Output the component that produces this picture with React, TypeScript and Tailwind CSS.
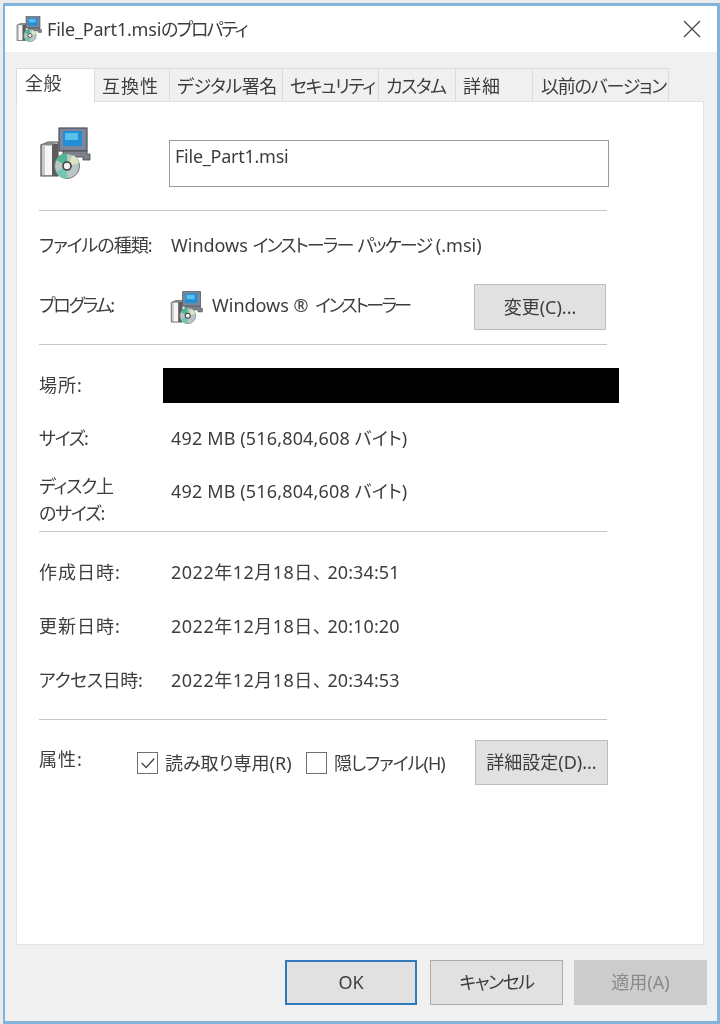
import React from "react";

function MsiIcon({ className }: { className: string }) {
  return (
    <svg viewBox="0 0 52 52" className={className}>
      <path d="M2 18 L9 15 L19 15 L19 49 L2 49 Z" fill="#c9c9c9" stroke="#4f4f4f" strokeWidth="1.2" />
      <rect x="6" y="19" width="7" height="29" fill="#f6f6f6" />
      <rect x="13" y="17" width="6" height="32" fill="#5c5c5c" />
      <path d="M2 18 L9 15 L19 15 L13 18 Z" fill="#8a8a8a" />
      <rect x="20" y="1" width="28" height="23" fill="#7f8698" stroke="#4a5163" strokeWidth="1.2" />
      <rect x="24" y="4" width="19" height="15" fill="#1f8fd8" />
      <rect x="26" y="6" width="13" height="7" fill="#5cc0ee" />
      <path d="M24 24 L48 24 L48 27 L51 27 L51 33 L44 33 L44 30 L24 30 Z" fill="#7c818c" stroke="#454545" strokeWidth="0.8" />
      <circle cx="28" cy="39" r="12.5" fill="#b9c6c4" stroke="#6d7a78" strokeWidth="1" />
      <path d="M28 39 L17 33 A12.5 12.5 0 0 1 28 26.5 Z" fill="#4fb596" />
      <path d="M28 39 L17 45 A12.5 12.5 0 0 0 28 51.5 Z" fill="#75c6b4" />
      <path d="M28 39 L40 36 A12.5 12.5 0 0 0 34 28 Z" fill="#e0e5c4" />
      <circle cx="28" cy="39" r="4" fill="#f2f2f2" stroke="#3f3f3f" strokeWidth="1.6" />
    </svg>
  );
}

function Divider() {
  return <div className="h-px w-[568px] bg-[#c6c6c6]" />;
}

function Row({
  label,
  labelClass = "",
  height,
  children,
}: {
  label: string;
  labelClass?: string;
  height: string;
  children: React.ReactNode;
}) {
  return (
    <div className={`flex items-center ${height}`}>
      <div className={`w-[132px] shrink-0 whitespace-nowrap ${labelClass}`}>{label}</div>
      <div className="whitespace-nowrap">{children}</div>
    </div>
  );
}

function DateValue({ date, time }: { date: string; time: string }) {
  return (
    <>
      <span className="mr-[5px] tracking-[0.5px]">{date}</span>
      <span className="tracking-[0.1px]">{time}</span>
    </>
  );
}

const tabs = [
  { label: "互換性", c: "w-[75px] pl-[7px] tracking-[1px]" },
  { label: "デジタル署名", c: "w-[113px] pl-[7px] tracking-[-0.5px]" },
  { label: "セキュリティ", c: "w-[96px] pl-[7px] tracking-[-1.4px]" },
  { label: "カスタム", c: "w-[77px] pl-[7px] tracking-[-1.5px]" },
  { label: "詳細", c: "w-[77px] pl-[7px] tracking-[1px]" },
  { label: "以前のバージョン", c: "w-[136px] pl-[8px] tracking-[-1.2px]" },
];

function Check({ checked }: { checked?: boolean }) {
  return (
    <div className="flex h-[22px] w-[21px] shrink-0 items-center justify-center border border-[#6f6f6f] bg-white">
      {checked && (
        <svg viewBox="0 0 20 20" className="h-[18px] w-[18px]">
          <path d="M3 10 L8 15 L17 5" fill="none" stroke="#4a4a4a" strokeWidth="1.6" />
        </svg>
      )}
    </div>
  );
}

export default function App() {
  return (
    <div className="h-[1024px] w-[720px] overflow-hidden bg-[#ebebeb] pl-[3px] pt-[3px] font-['Noto_Sans','Noto_Sans_CJK_JP',sans-serif] text-[18px] text-[#3d3d3d] [font-feature-settings:'palt'] blur-[0.5px]">
      <div className="flex h-[1021px] w-[717px] flex-col border-[3px] border-l-[2px] border-[#84b3da] bg-[#f0f0f0]">
        <div className="flex h-[46px] items-center justify-between bg-white pl-[11px] pr-[16px]">
          <div className="flex items-center gap-[5px]">
            <MsiIcon className="h-[26px] w-[26px]" />
            <span className="whitespace-nowrap">
              <span className="tracking-[-0.2px]">File_Part1.msi</span>
              <span className="tracking-[-2px]">のプロパティ</span>
            </span>
          </div>
          <svg viewBox="0 0 18 18" className="h-[18px] w-[18px]">
            <path d="M1 1 L17 17 M17 1 L1 17" stroke="#4a4a4a" strokeWidth="1.3" />
          </svg>
        </div>

        <div className="flex pl-[11px] pt-[16px]">
          <div className="relative z-10 -mb-[2px] flex h-[35px] w-[79px] justify-start border-x border-t border-[#dcdcdc] bg-white pl-[8px] pt-[1px] tracking-[0.5px]">
            全般
          </div>
          {tabs.map((t) => (
            <div
              key={t.label}
              className={`flex h-[33px] items-center justify-start whitespace-nowrap border-r border-t border-[#dcdcdc] bg-[#f0f0f0] pt-[2px] ${t.c}`}
            >
              {t.label}
            </div>
          ))}
        </div>

        <div className="ml-[11px] h-[844px] w-[688px] border border-[#e2e2e2] bg-white pl-[22px]">
          <div className="flex h-[108px]">
            <MsiIcon className="mt-[25px] h-[52px] w-[52px]" />
            <div className="ml-[78px] mt-[38px] flex h-[47px] w-[440px] items-start border border-[#9a9a9a] pl-[5px] pt-[2px] tracking-[-0.25px]">
              File_Part1.msi
            </div>
          </div>
          <Divider />
          <Row label="ファイルの種類:" labelClass="tracking-[-1px]" height="h-[68px]">
            Windows <span className="tracking-[-1.8px]">インストーラー</span>{" "}
            <span className="tracking-[-1.8px]">パッケージ</span> (.msi)
          </Row>
          <div className="flex h-[56px] items-center">
            <div className="w-[131px] shrink-0 pb-[3px] tracking-[-2.2px]">プログラム:</div>
            <MsiIcon className="h-[33px] w-[33px]" />
            <div className="ml-[9px] w-[262px] shrink-0 whitespace-nowrap pb-[3px]">
              Windows <span className="mr-[2px]">®</span> <span className="tracking-[-2.6px]">インストーラー</span>
            </div>
            <div className="flex h-[46px] w-[132px] items-center justify-center border border-[#bdbdbd] bg-[#e1e1e1]">
              変更(C)...
            </div>
          </div>
          <div className="h-[9px]" />
          <Divider />
          <div className="mt-[23px] flex h-[35px] items-center">
            <div className="w-[124px] shrink-0 tracking-[1px]">場所:</div>
            <div className="h-[35px] w-[456px] bg-black" />
          </div>
          <Row label="サイズ:" labelClass="tracking-[-1.3px]" height="h-[70px]">
            <span className="tracking-[0.15px]">492 MB (516,804,608 バイト)</span>
          </Row>
          <div className="flex h-[54px]">
            <div className="w-[132px] shrink-0 leading-[27px] tracking-[-1.2px]">
              ディスク上
              <br />
              のサイズ:
            </div>
            <div className="whitespace-nowrap pt-[5px] leading-[27px] tracking-[0.15px]">492 MB (516,804,608 バイト)</div>
          </div>
          <div className="h-[4px]" />
          <Divider />
          <div className="h-[13px]" />
          <Row label="作成日時:" labelClass="tracking-[1px]" height="h-[54px]">
            <DateValue date="2022年12月18日、" time="20:34:51" />
          </Row>
          <Row label="更新日時:" labelClass="tracking-[1px]" height="h-[54px]">
            <DateValue date="2022年12月18日、" time="20:10:20" />
          </Row>
          <Row label="アクセス日時:" labelClass="tracking-[-0.4px]" height="h-[54px]">
            <DateValue date="2022年12月18日、" time="20:34:53" />
          </Row>
          <div className="h-[12px]" />
          <Divider />
          <div className="mt-[20px] flex h-[45px] items-center">
            <div className="w-[98px] shrink-0 pb-[6px] tracking-[1px]">属性:</div>
            <Check checked />
            <div className="ml-[7px] w-[141px] shrink-0 whitespace-nowrap pt-[1px]">読み取り専用(R)</div>
            <Check />
            <div className="ml-[7px] w-[141px] shrink-0 whitespace-nowrap pt-[1px] tracking-[-1px]">隠しファイル(H)</div>
            <div className="flex h-[45px] w-[133px] items-center justify-center whitespace-nowrap border border-[#bdbdbd] bg-[#e1e1e1]">
              詳細設定(D)...
            </div>
          </div>
        </div>

        <div className="flex pl-[280px] pt-[15px]">
          <div className="flex h-[45px] w-[132px] items-center justify-center border-2 border-[#2f7ab8] bg-[#e1e1e1]">
            OK
          </div>
          <div className="ml-[13px] flex h-[45px] w-[133px] items-center justify-center border border-[#adadad] bg-[#e1e1e1] tracking-[-1.5px]">
            キャンセル
          </div>
          <div className="ml-[11px] flex h-[45px] w-[133px] items-center justify-center bg-[#cccccc] text-[#8a8a8a]">
            適用(A)
          </div>
        </div>
      </div>
    </div>
  );
}
